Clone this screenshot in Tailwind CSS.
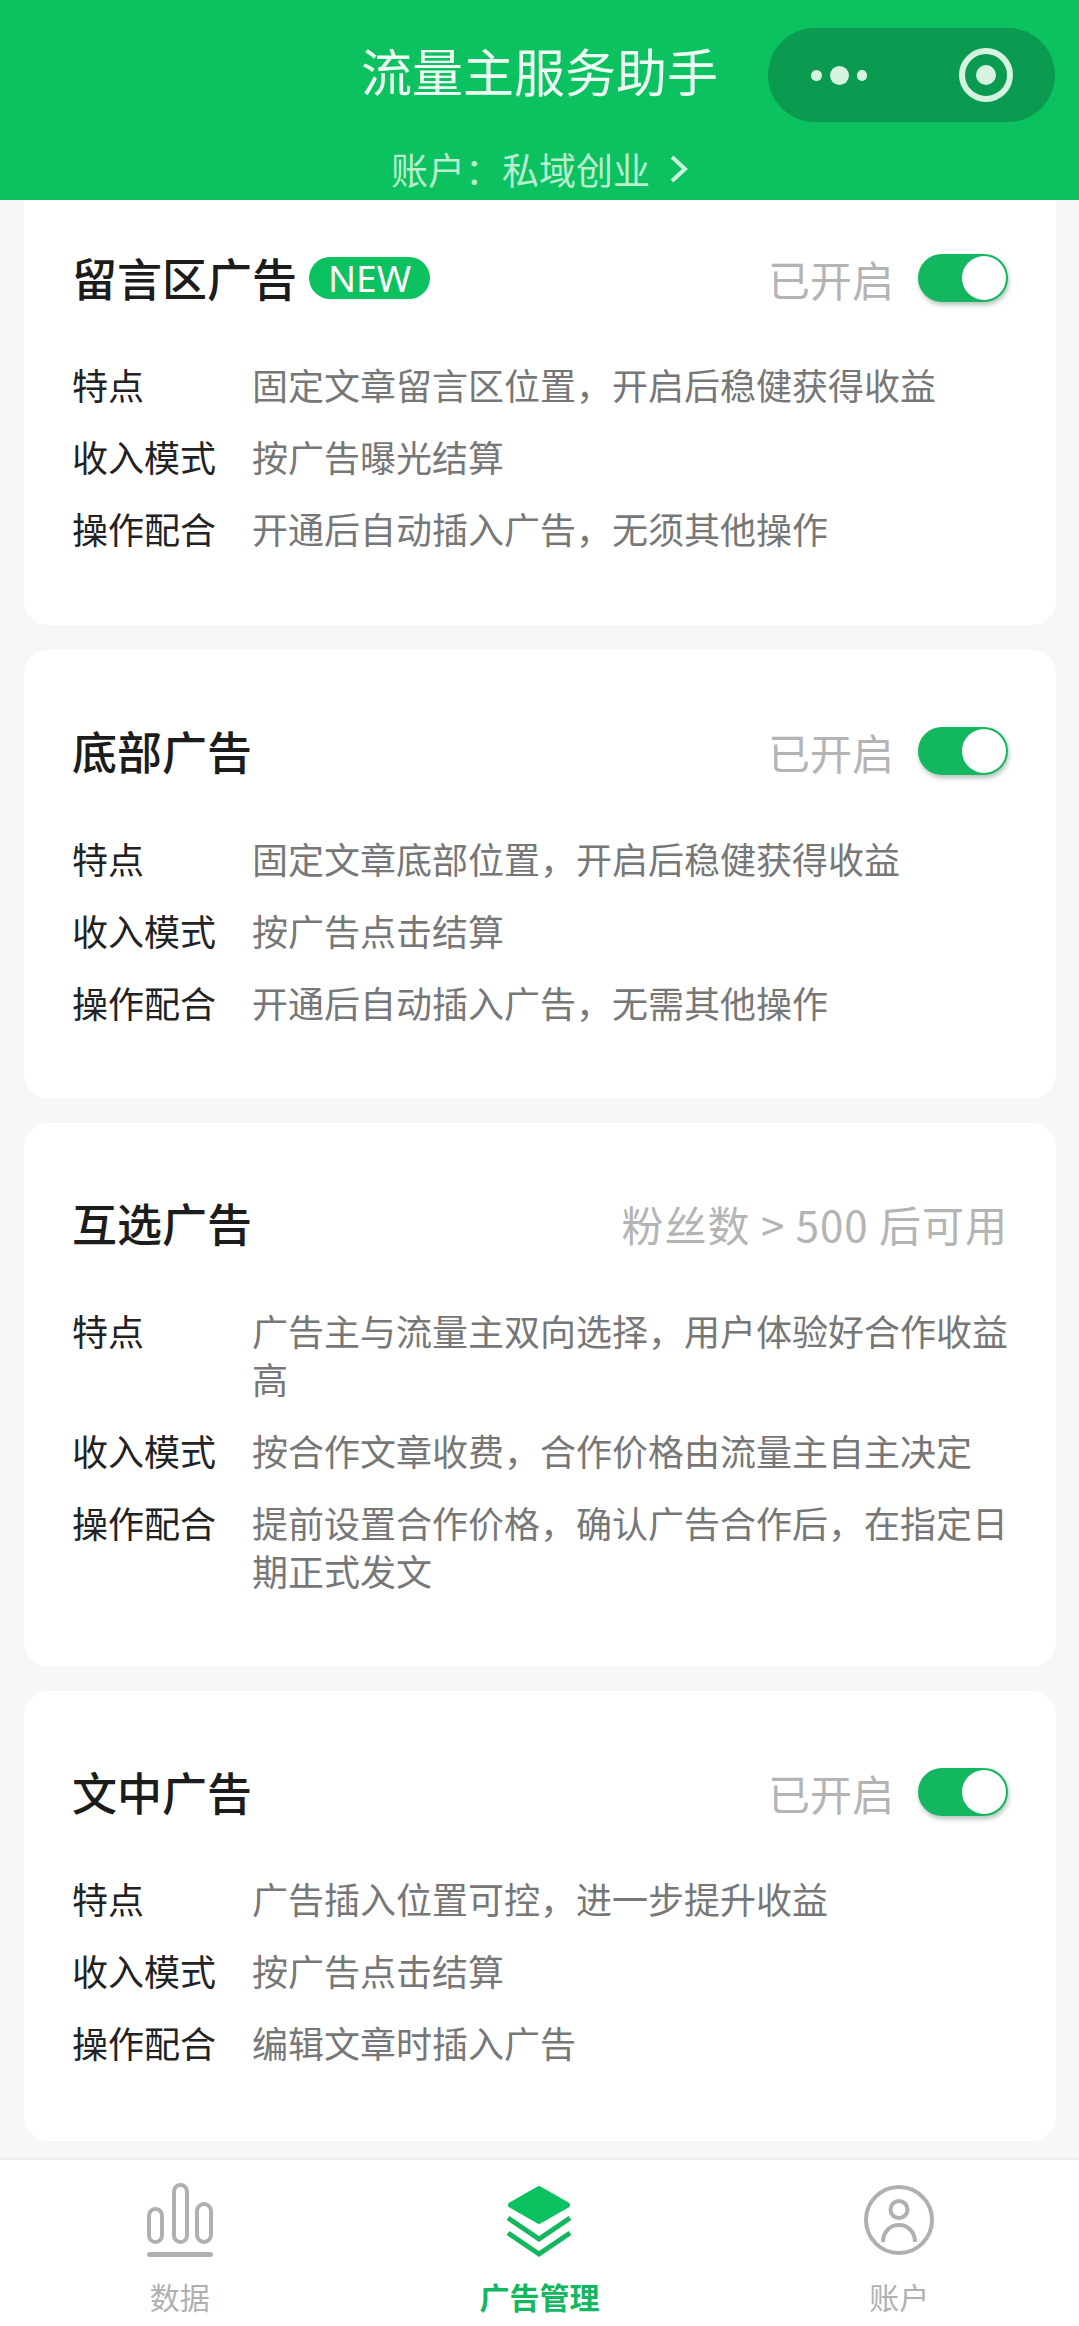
<!doctype html>
<html lang="zh"><head><meta charset="utf-8">
<script src="https://cdn.jsdelivr.net/npm/@tailwindcss/browser@4"></script></head>
<body class="m-0">
<div class="relative w-[1079px] h-[2326px] overflow-hidden bg-[#f7f7f7] flex flex-col font-['Noto_Sans_CJK_SC','Noto_Sans',sans-serif]">
  <header class="relative h-[200px] shrink-0 bg-[#0bc160] text-white">
    <div class="absolute left-0 right-0 top-[40px] text-center text-[51px] leading-[60px] text-[#eefbf3]">流量主服务助手</div>
    <div class="absolute left-0 right-0 top-[145px] flex justify-center items-center gap-[20px] text-[37px] leading-[48px] text-[#b9efcf]">
      <span>账户<span class="font-['Noto_Sans_CJK_TC']">：</span>私域创业</span>
      <svg width="18" height="28" viewBox="0 0 18 28" fill="none" stroke="#cdf3dc" stroke-width="4"><path d="M2 2l13 12L2 26"/></svg>
    </div>
    <div class="absolute left-[768px] top-[28px] w-[287px] h-[94px] rounded-[47px] bg-[#0a9a50] flex items-center">
      <div class="w-[142px] h-full flex items-center justify-center gap-[8px]">
        <span class="w-[11px] h-[11px] rounded-full bg-[#d6f3e2]"></span>
        <span class="w-[19px] h-[19px] rounded-full bg-[#d6f3e2]"></span>
        <span class="w-[10px] h-[11px] rounded-full bg-[#d6f3e2]"></span>
      </div>
      <div class="w-px h-[60px] bg-[#0b9150]"></div>
      <div class="flex-1 flex items-center justify-center pl-[6px]">
        <span class="w-[54px] h-[54px] rounded-full border-[6px] border-[#d6f3e2] flex items-center justify-center"><span class="w-[20px] h-[20px] rounded-full bg-[#d6f3e2]"></span></span>
      </div>
    </div>
  </header>

  <main class="flex-1 pl-[24px] pr-[23px] flex flex-col gap-[25px]">
    <section class="h-[425px] rounded-b-[24px] bg-white px-[48px] pt-[48px] shrink-0">
      <div class="flex items-center justify-between h-[60px]">
        <div class="flex items-center gap-[12px]"><h2 class="text-[45px] leading-[60px] font-medium text-[#1c1c1c]">留言区广告</h2><span class="h-[42px] w-[121px] rounded-full bg-[#0bc160] text-white text-[37px] leading-[42px] text-center font-['Noto_Sans']">NEW</span></div>
        <div class="flex items-center gap-[24px]"><span class="text-[42px] text-[#b4b4b4]">已开启</span>
          <span class="relative block w-[90px] h-[48px] rounded-full bg-[#12b75f] shadow-[1px_3px_5px_rgba(0,60,30,0.3)]"><span class="absolute right-[2px] top-[2px] w-[44px] h-[44px] rounded-full bg-white"></span></span></div>
      </div>
      <dl class="mt-[52px] flex flex-col gap-[24px] text-[36px] leading-[48px]">
        <div class="flex"><dt class="w-[180px] shrink-0 text-[#222]">特点</dt><dd class="text-[#777]">固定文章留言区位置，开启后稳健获得收益</dd></div>
        <div class="flex"><dt class="w-[180px] shrink-0 text-[#222]">收入模式</dt><dd class="text-[#777]">按广告曝光结算</dd></div>
        <div class="flex"><dt class="w-[180px] shrink-0 text-[#222]">操作配合</dt><dd class="text-[#777]">开通后自动插入广告，无须其他操作</dd></div>
      </dl>
    </section>

    <section class="h-[448px] rounded-[24px] bg-white px-[48px] pt-[71px] shrink-0">
      <div class="flex items-center justify-between h-[60px]">
        <h2 class="text-[45px] leading-[60px] font-medium text-[#1c1c1c]">底部广告</h2>
        <div class="flex items-center gap-[24px]"><span class="text-[42px] text-[#b4b4b4]">已开启</span>
          <span class="relative block w-[90px] h-[48px] rounded-full bg-[#12b75f] shadow-[1px_3px_5px_rgba(0,60,30,0.3)]"><span class="absolute right-[2px] top-[2px] w-[44px] h-[44px] rounded-full bg-white"></span></span></div>
      </div>
      <dl class="mt-[53px] flex flex-col gap-[24px] text-[36px] leading-[48px]">
        <div class="flex"><dt class="w-[180px] shrink-0 text-[#222]">特点</dt><dd class="text-[#777]">固定文章底部位置，开启后稳健获得收益</dd></div>
        <div class="flex"><dt class="w-[180px] shrink-0 text-[#222]">收入模式</dt><dd class="text-[#777]">按广告点击结算</dd></div>
        <div class="flex"><dt class="w-[180px] shrink-0 text-[#222]">操作配合</dt><dd class="text-[#777]">开通后自动插入广告，无需其他操作</dd></div>
      </dl>
    </section>

    <section class="h-[543px] rounded-[24px] bg-white px-[48px] pt-[70px] shrink-0">
      <div class="flex items-center justify-between h-[60px]">
        <h2 class="text-[45px] leading-[60px] font-medium text-[#1c1c1c]">互选广告</h2>
        <span class="text-[42px] tracking-[1px] text-[#b4b4b4]">粉丝数 &gt; 500 后可用</span>
      </div>
      <dl class="mt-[53px] flex flex-col gap-[24px] text-[36px] leading-[48px]">
        <div class="flex"><dt class="w-[180px] shrink-0 text-[#222]">特点</dt><dd class="text-[#777]">广告主与流量主双向选择，用户体验好合作收益高</dd></div>
        <div class="flex"><dt class="w-[180px] shrink-0 text-[#222]">收入模式</dt><dd class="text-[#777]">按合作文章收费，合作价格由流量主自主决定</dd></div>
        <div class="flex"><dt class="w-[180px] shrink-0 text-[#222]">操作配合</dt><dd class="text-[#777]">提前设置合作价格，确认广告合作后，在指定日期正式发文</dd></div>
      </dl>
    </section>

    <section class="h-[450px] rounded-[24px] bg-white px-[48px] pt-[71px] shrink-0">
      <div class="flex items-center justify-between h-[60px]">
        <h2 class="text-[45px] leading-[60px] font-medium text-[#1c1c1c]">文中广告</h2>
        <div class="flex items-center gap-[24px]"><span class="text-[42px] text-[#b4b4b4]">已开启</span>
          <span class="relative block w-[90px] h-[48px] rounded-full bg-[#12b75f] shadow-[1px_3px_5px_rgba(0,60,30,0.3)]"><span class="absolute right-[2px] top-[2px] w-[44px] h-[44px] rounded-full bg-white"></span></span></div>
      </div>
      <dl class="mt-[52px] flex flex-col gap-[24px] text-[36px] leading-[48px]">
        <div class="flex"><dt class="w-[180px] shrink-0 text-[#222]">特点</dt><dd class="text-[#777]">广告插入位置可控，进一步提升收益</dd></div>
        <div class="flex"><dt class="w-[180px] shrink-0 text-[#222]">收入模式</dt><dd class="text-[#777]">按广告点击结算</dd></div>
        <div class="flex"><dt class="w-[180px] shrink-0 text-[#222]">操作配合</dt><dd class="text-[#777]">编辑文章时插入广告</dd></div>
      </dl>
    </section>
  </main>

  <nav class="absolute left-0 right-0 bottom-0 h-[168px] bg-white border-t-[2px] border-[#eeeeee] grid grid-cols-3">
    <div class="flex flex-col items-center pt-[22px]">
      <svg width="72" height="76" viewBox="0 0 72 76" fill="none" stroke="#b0b0b0" stroke-width="4"><rect x="5" y="27" width="13" height="33" rx="6.5"/><rect x="30" y="3" width="13" height="57" rx="6.5"/><rect x="53" y="22" width="14" height="38" rx="7"/><path d="M5.5 72.5h61" stroke-width="5" stroke-linecap="round"/></svg>
      <span class="mt-[18px] text-[30px] leading-[40px] text-[#b0b0b0]">数据</span>
    </div>
    <div class="flex flex-col items-center pt-[22px]">
      <svg width="72" height="76" viewBox="0 0 72 76" fill="none"><path d="M36 7L64 23L36 39L8 23Z" fill="#0bc160" stroke="#0bc160" stroke-width="6" stroke-linejoin="round"/><path d="M5 36L36 57L67 36" stroke="#12b75f" stroke-width="5"/><path d="M5 51L36 72L67 51" stroke="#12b75f" stroke-width="5"/></svg>
      <span class="mt-[18px] text-[30px] leading-[40px] font-bold text-[#12b75f]">广告管理</span>
    </div>
    <div class="flex flex-col items-center pt-[22px]">
      <svg width="72" height="76" viewBox="0 0 72 76" fill="none" stroke="#b0b0b0" stroke-width="4"><circle cx="36" cy="38" r="33"/><circle cx="36" cy="27.5" r="8.5"/><path d="M20 60c0-10 7-17 16-17s16 7 16 17"/></svg>
      <span class="mt-[18px] text-[30px] leading-[40px] text-[#b0b0b0]">账户</span>
    </div>
  </nav>
</div>
</body></html>
